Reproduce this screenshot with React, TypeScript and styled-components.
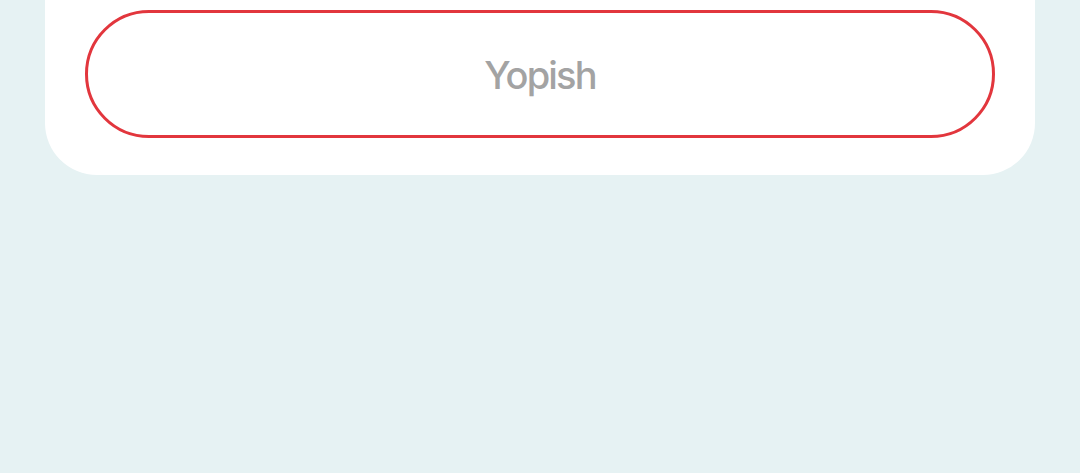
import styled, { createGlobalStyle } from 'styled-components';

const GlobalStyle = createGlobalStyle`
	html, body {
		margin: 0;
		padding: 0;
		background-color: #e6f2f3;
		font-family: Inter, 'Noto Sans', sans-serif;
	}
`;

const App = () => {
	return (
		<>
			<GlobalStyle />
			<Page>
				<Sheet>
					<CloseButton type='button'>Yopish</CloseButton>
				</Sheet>
			</Page>
		</>
	);
};

export default App;

const Page = styled.div`
	width: 1080px;
	height: 473px;
	padding: 0 45px;
	box-sizing: border-box;
`;

const Sheet = styled.div`
	background-color: #fff;
	border-radius: 0 0 52px 52px;
	padding: 10px 40px 37px;
	display: flex;
	flex-direction: column;
`;

const CloseButton = styled.button`
	height: 128px;
	width: 100%;
	padding: 2px 0 0;
	background: #fff;
	border: 3px solid #e2363d;
	border-radius: 64px;
	box-sizing: border-box;
	font-family: Inter, sans-serif;
	font-size: 38px;
	font-weight: 500;
	letter-spacing: -1.8px;
	color: #a3a3a3;
	cursor: pointer;
`;
